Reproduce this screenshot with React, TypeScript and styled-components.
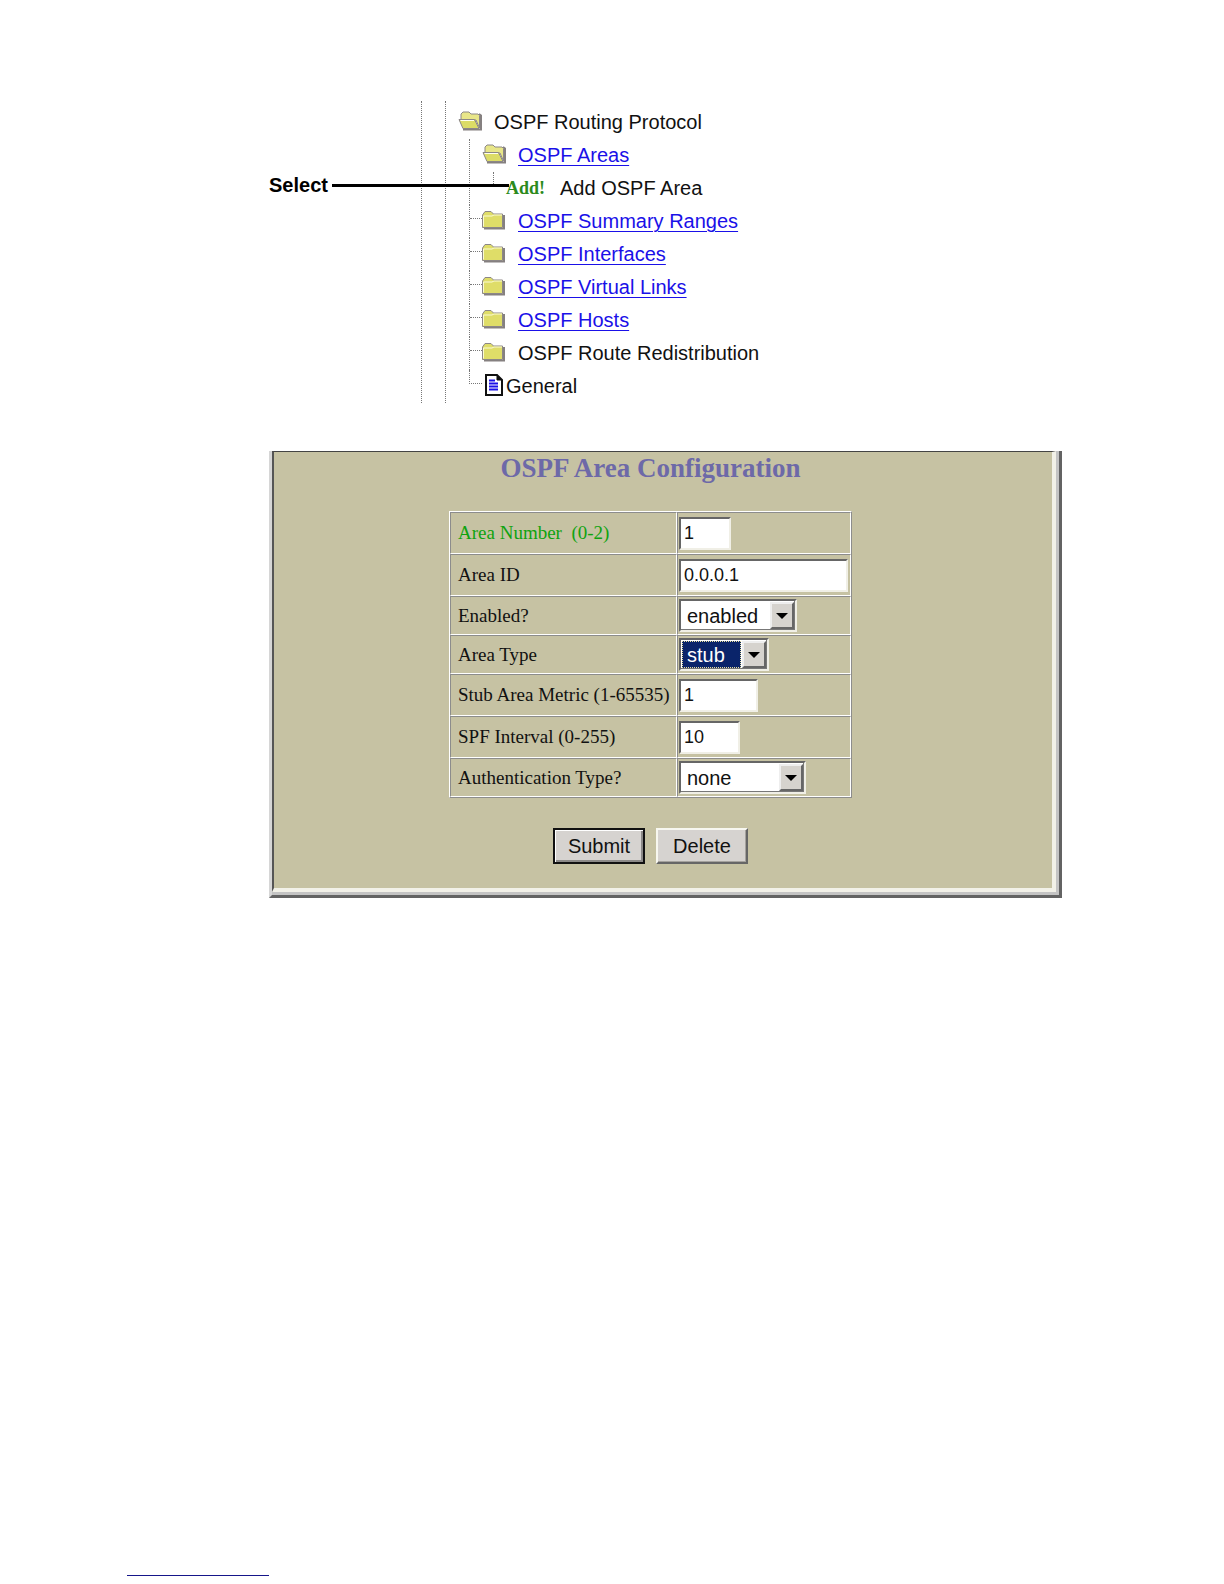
import React from "react";
import styled, { createGlobalStyle, css } from "styled-components";

const GlobalStyle = createGlobalStyle`
  *, *::before, *::after { box-sizing: border-box; }
  body { margin: 0; background: #fff; color: #111; font-family: "Liberation Sans", Arial, sans-serif; }
`;

const sans = `"Liberation Sans", Arial, sans-serif`;
const serif = `"Liberation Serif", "Times New Roman", serif`;

const Page = styled.div`
  display: flex;
  flex-direction: column;
  min-height: 100vh;
  padding: 101px 162px 8px 127px;
`;

const Content = styled.main`
  display: flex;
  flex-direction: column;
  gap: 48px;
  padding-left: 142px;
`;

/* ---------- navigation tree ---------- */

const TreeFigure = styled.nav`
  position: relative;
  display: flex;
  padding-left: 152px;
  font-size: 20px;
  line-height: 33px;
  white-space: nowrap;
`;

const Guide = styled.span<{ $width: number }>`
  flex: none;
  width: ${(p) => p.$width}px;
  border-left: 1px dotted #777;
`;

const List = styled.ul`
  list-style: none;
  margin: 0;
  padding: 0;
`;

const RootList = styled(List)`
  padding-top: 5px;
`;

const ChildList = styled(List)`
  padding-left: 11px;
`;

const Item = styled.li`
  display: flex;
`;

const Rail = styled.span<{ $elbow?: boolean; $last?: boolean }>`
  flex: none;
  width: 13px;
  ${(p) => !p.$last && css`border-left: 1px dotted #777;`}
  &::before {
    content: "";
    display: block;
    height: 14px;
    ${(p) => p.$elbow && css`border-bottom: 1px dotted #777;`}
    ${(p) => p.$last && css`border-left: 1px dotted #777;`}
  }
`;

const Row = styled.div<{ $gap?: number }>`
  display: flex;
  align-items: center;
  gap: ${(p) => p.$gap ?? 12}px;
  height: 33px;
`;

const Stub = styled.span`
  align-self: flex-start;
  height: 14px;
  margin-left: 11px;
  border-left: 1px dotted #777;
`;

const AddMark = styled.span`
  width: 42px;
  font: bold 18px/33px ${serif};
  color: #2c8a1c;
`;

const TreeLink = styled.a`
  color: #1a10e8;
  text-decoration: underline;
  text-underline-offset: 3px;
  text-decoration-thickness: 1px;
`;

const Callout = styled.div`
  position: absolute;
  left: 0;
  top: 68px;
  display: flex;
  align-items: center;
  gap: 4px;
  width: 240px;
  font-weight: bold;
  color: #000;
  &::after {
    content: "";
    flex: 1;
    height: 3px;
    background: #000;
  }
`;

const Glyph = styled.svg`
  flex: none;
  display: block;
  margin-bottom: 4px;
`;

const OpenFolder = () => (
  <Glyph width="24" height="20" viewBox="0 0 24 20" aria-hidden="true">
    <path d="M5 18.5H23V4.5L21 3" fill="none" stroke="#858080" strokeWidth="2" />
    <path d="M3 9V3L5 1H11L13 3H20L21.500 4.500V17L18 9Z" fill="#e8e688" stroke="#8c8787" />
    <path d="M1 8.500H16.500L21 17.500H5Z" fill="#dcdc66" stroke="#8c8787" />
    <path d="M2.500 9.500H16" stroke="#fffff0" />
  </Glyph>
);

const ClosedFolder = () => (
  <Glyph width="24" height="20" viewBox="0 0 24 20" aria-hidden="true">
    <path d="M2 18.500H22V5" fill="none" stroke="#858080" strokeWidth="2" />
    <path d="M.5 17.500V5L3 1.500H9L11.500 4H20.500V17.500Z" fill="#dfdd68" stroke="#8c8787" />
    <path d="M1.500 16.500V6H10L12 5H20" fill="none" stroke="#fbfbd4" />
  </Glyph>
);

const DocumentIcon = () => (
  <Glyph width="18" height="22" viewBox="0 0 18 22" aria-hidden="true">
    <path d="M1 1H12L17 6V21H1Z" fill="#fff" stroke="#111" strokeWidth="2" />
    <path d="M12 1V6H17Z" fill="#111" stroke="#111" />
    <path d="M4 6.500H10M4 9.500H13M4 12.500H13M4 15.500H13" stroke="#1a10e8" strokeWidth="2" />
  </Glyph>
);

/* ---------- configuration form ---------- */

const Panel = styled.div`
  border: solid;
  border-width: 0 3px 3px 3px;
  border-color: #636363 #636363 #636363 #d6d6d6;
`;

const PanelRim = styled.div`
  border: solid;
  border-width: 0 3px 3px 0;
  border-color: #c4c4c4;
`;

const Form = styled.form`
  display: flex;
  flex-direction: column;
  align-items: center;
  padding: 0 25px 24px 0;
  border: solid;
  border-width: 1px 4px 4px 2px;
  border-color: #444 #f2f1e8 #f2f1e8 #555;
  background: #c6c2a3;
`;

const Title = styled.h1`
  margin: 0 0 26px;
  font: bold 27px/33px ${serif};
  color: #6d69a8;
`;

const Table = styled.table`
  width: 403px;
  border: 1px solid;
  border-color: #fff #8c8c8c #8c8c8c #fff;
  border-spacing: 0;
  font: 19px/22px ${serif};
`;

const Line = styled.tr<{ $tall?: boolean }>`
  height: ${(p) => (p.$tall ? 42 : 39)}px;
`;

const cell = css`
  border: 1px solid;
  border-color: #8c8c8c #fff #fff #8c8c8c;
`;

const Name = styled.th<{ $key?: boolean }>`
  ${cell}
  width: 227px;
  padding: 0 0 0 7px;
  text-align: left;
  font-weight: normal;
  white-space: nowrap;
  color: ${(p) => (p.$key ? "#0fa30f" : "#111")};
`;

const Value = styled.td`
  ${cell}
  padding: 0 1px;
`;

const sunken = css`
  border: 2px solid;
  border-color: #666 #f0efe6 #f0efe6 #666;
  background: #fff;
`;

const TextBox = styled.input<{ $width: number }>`
  ${sunken}
  display: block;
  width: ${(p) => p.$width}px;
  height: 33px;
  padding: 0 3px;
  font: 18px ${sans};
  color: #111;
  outline: none;
`;

const SelectFrame = styled.span<{ $width: number }>`
  ${sunken}
  display: flex;
  width: ${(p) => p.$width}px;
  height: 33px;
  padding: 1px;
  box-shadow: inset -1px -1px #777;
`;

const Select = styled.select<{ $active?: boolean }>`
  appearance: none;
  flex: 1;
  min-width: 0;
  margin: 0;
  padding: 0 4px;
  border: 1px ${(p) => (p.$active ? "dotted #e8e0a0" : "solid transparent")};
  border-radius: 0;
  background: ${(p) => (p.$active ? "#0a246a" : "#fff")};
  color: ${(p) => (p.$active ? "#fff" : "#111")};
  font: 20px ${sans};
  outline: none;
`;

const Arrow = styled.span`
  flex: none;
  display: grid;
  place-items: center;
  width: 24px;
  margin-left: 1px;
  border: 2px solid;
  border-color: #eee #666 #666 #eee;
  background: #d6d3ce;
  pointer-events: none;
`;

const Buttons = styled.div`
  display: flex;
  gap: 11px;
  margin-top: 30px;
`;

const Button = styled.button<{ $primary?: boolean }>`
  width: 92px;
  height: 36px;
  padding: 0;
  border: 2px solid;
  border-color: ${(p) => (p.$primary ? "#111" : "#f7f7f0 #666 #666 #f7f7f0")};
  box-shadow: ${(p) => (p.$primary ? "inset 1px 1px #fff, inset -2px -2px #8c8a88" : "inset -1px -1px #a5a29e")};
  background: #d6d3d0;
  font: 20px ${sans};
  color: #111;
`;

const FooterRule = styled.hr`
  width: 142px;
  height: 1px;
  margin: auto 0 0;
  border: 0;
  background: #16168a;
`;

type Field = {
  id: string;
  label: string;
  value: string;
  width: number;
  options?: string[];
  isKey?: boolean;
  active?: boolean;
};

const fields: Field[] = [
  { id: "number", label: "Area Number \u00a0(0-2)", value: "1", width: 52, isKey: true },
  { id: "area-id", label: "Area ID", value: "0.0.0.1", width: 169 },
  { id: "enabled", label: "Enabled?", value: "enabled", width: 118, options: ["enabled", "disabled"] },
  { id: "type", label: "Area Type", value: "stub", width: 90, options: ["stub", "transit"], active: true },
  { id: "metric", label: "Stub Area Metric (1-65535)", value: "1", width: 79 },
  { id: "spf", label: "SPF Interval (0-255)", value: "10", width: 61 },
  { id: "auth", label: "Authentication Type?", value: "none", width: 127, options: ["none", "simple"] },
];

const folders = [
  { name: "OSPF Summary Ranges", link: true },
  { name: "OSPF Interfaces", link: true },
  { name: "OSPF Virtual Links", link: true },
  { name: "OSPF Hosts", link: true },
  { name: "OSPF Route Redistribution", link: false },
];

function NavigationTree() {
  return (
    <TreeFigure aria-label="OSPF">
      <Guide $width={24} />
      <Guide $width={13} />
      <RootList>
        <li>
          <Row>
            <OpenFolder />
            <span>OSPF Routing Protocol</span>
          </Row>
          <ChildList>
            <Item>
              <Rail />
              <div>
                <Row>
                  <OpenFolder />
                  <TreeLink href="#areas">OSPF Areas</TreeLink>
                </Row>
                <Row>
                  <Stub />
                  <AddMark>Add!</AddMark>
                  <span>Add OSPF Area</span>
                </Row>
              </div>
            </Item>
            {folders.map((f) => (
              <Item key={f.name}>
                <Rail $elbow />
                <Row>
                  <ClosedFolder />
                  {f.link ? <TreeLink href="#folder">{f.name}</TreeLink> : <span>{f.name}</span>}
                </Row>
              </Item>
            ))}
            <Item>
              <Rail $elbow $last />
              <Row $gap={3}>
                <span />
                <DocumentIcon />
                <span>General</span>
              </Row>
            </Item>
          </ChildList>
        </li>
      </RootList>
      <Callout>Select</Callout>
    </TreeFigure>
  );
}

function FieldControl({ field }: { field: Field }) {
  if (!field.options) {
    return <TextBox id={field.id} $width={field.width} defaultValue={field.value} />;
  }
  return (
    <SelectFrame $width={field.width}>
      <Select id={field.id} $active={field.active} defaultValue={field.value}>
        {field.options.map((o) => (
          <option key={o}>{o}</option>
        ))}
      </Select>
      <Arrow>
        <svg width="12" height="6" viewBox="0 0 12 6" aria-hidden="true">
          <path d="M0 0H12L6 6Z" fill="#000" />
        </svg>
      </Arrow>
    </SelectFrame>
  );
}

export default function App() {
  return (
    <Page>
      <GlobalStyle />
      <Content>
        <NavigationTree />
        <Panel>
          <PanelRim>
            <Form onSubmit={(e) => e.preventDefault()}>
              <Title>OSPF Area Configuration</Title>
              <Table>
                <tbody>
                  {fields.map((f) => (
                    <Line key={f.id} $tall={!f.options}>
                      <Name scope="row" $key={f.isKey}>
                        <label htmlFor={f.id}>{f.label}</label>
                      </Name>
                      <Value>
                        <FieldControl field={f} />
                      </Value>
                    </Line>
                  ))}
                </tbody>
              </Table>
              <Buttons>
                <Button type="submit" $primary>Submit</Button>
                <Button type="button">Delete</Button>
              </Buttons>
            </Form>
          </PanelRim>
        </Panel>
      </Content>
      <FooterRule />
    </Page>
  );
}
